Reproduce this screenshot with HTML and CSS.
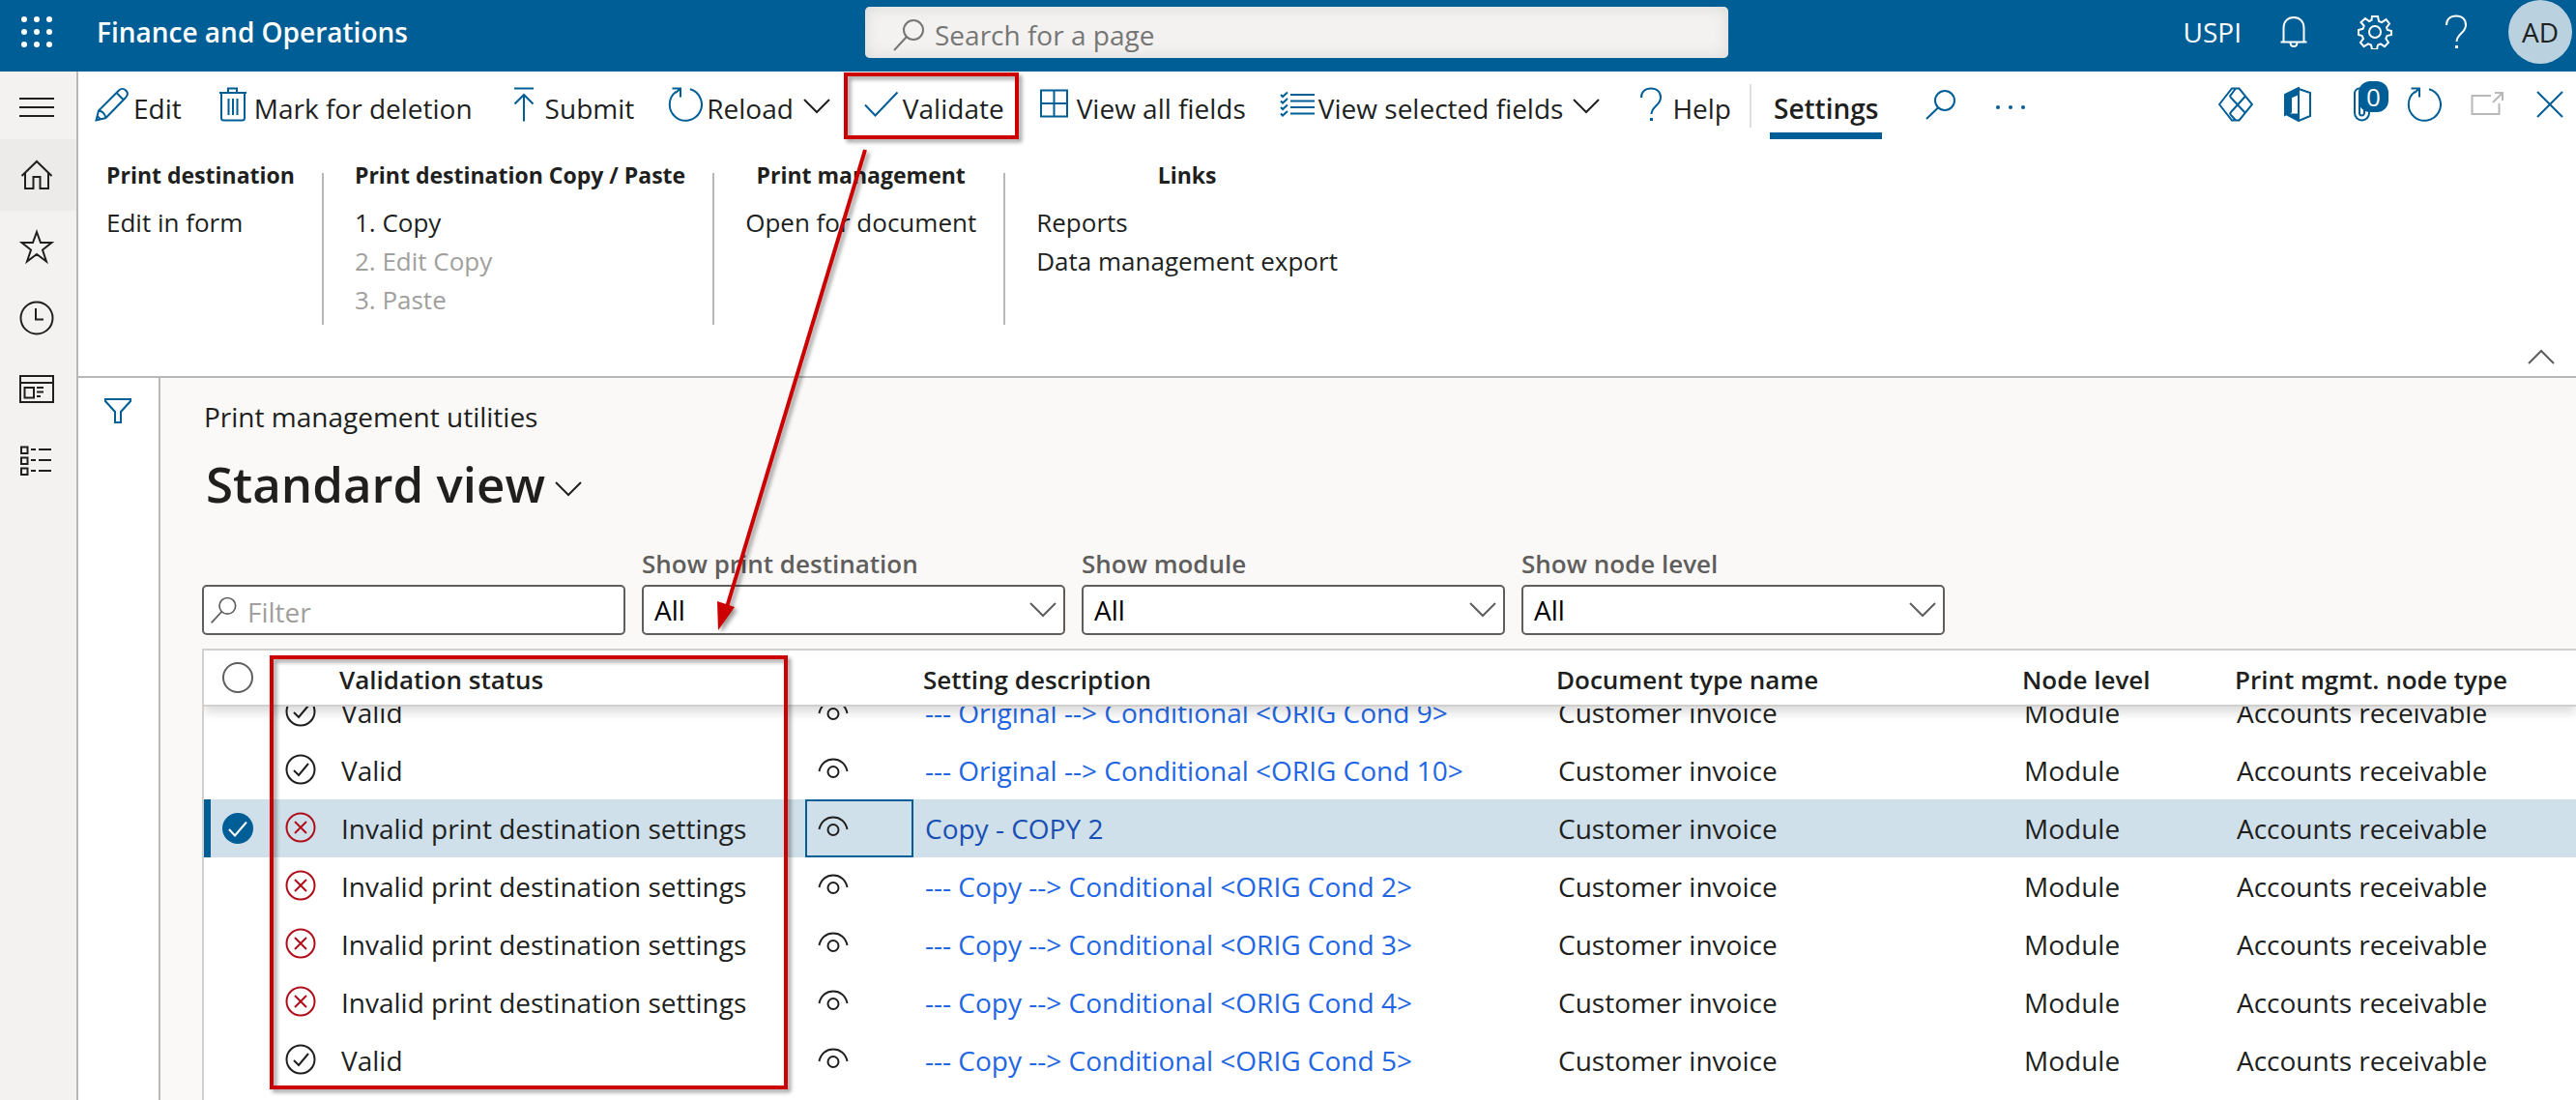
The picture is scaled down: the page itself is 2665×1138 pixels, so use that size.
FILE: index.html
```html
<!DOCTYPE html>
<html lang="en">
    <head>
        <meta charset="utf-8">
        <title>Finance and Operations</title>
        <link rel="stylesheet" href="styles.css">
    </head>
    <body>
        <!-- shared icons -->
        <svg class="sprite" aria-hidden="true">
            <symbol id="i-search" viewBox="0 0 36 36"><circle cx="22" cy="13" r="10"/><path d="M15 20L2 34"/></symbol>
            <symbol id="i-chevron" viewBox="0 0 28 16"><path d="M1 1l13 13L27 1"/></symbol>
            <symbol id="i-help" viewBox="0 0 36 36"><path d="M8 11C8 5 12 1.500 18 1.500S28 5 28 11c0 8-9.500 9-9.500 17"/><path d="M18.500 32v3" stroke-width="3"/></symbol>
            <symbol id="i-reload" viewBox="0 0 36 36"><path d="M23 2.200A16.600 16.600 0 1 1 8.500 4.800"/><path d="M4.500 1.500h8.500v9M13 1.500L8 6"/></symbol>
            <symbol id="i-valid" viewBox="0 0 32 32"><circle cx="16" cy="16" r="14.500"/><path d="M9 17l5 5 10-12"/></symbol>
            <symbol id="i-invalid" viewBox="0 0 32 32"><circle cx="16" cy="16" r="14.500"/><path d="M10 10l12 12M22 10L10 22"/></symbol>
            <symbol id="i-eye" viewBox="0 0 32 22"><path d="M1.500 14C3 6 9 1.500 16 1.500S29 6 30.500 14"/><circle cx="16" cy="14.500" r="5.500"/></symbol>
        </svg>

        <header class="topbar">
            <div class="topbar__left">
                <button class="waffle" aria-label="Apps">
                    <svg viewBox="0 0 32 32"><circle cx="3" cy="3" r="3"/><circle cx="16" cy="3" r="3"/><circle cx="29" cy="3" r="3"/><circle cx="3" cy="16" r="3"/><circle cx="16" cy="16" r="3"/><circle cx="29" cy="16" r="3"/><circle cx="3" cy="29" r="3"/><circle cx="16" cy="29" r="3"/><circle cx="29" cy="29" r="3"/></svg>
                </button>
                <span class="topbar__title">Finance and Operations</span>
            </div>
            <div class="search">
                <svg class="icon"><use href="#i-search"/></svg>
                <input type="text" class="search__input" placeholder="Search for a page" aria-label="Search for a page">
            </div>
            <div class="topbar__right">
                <button class="company">USPI</button>
                <button class="topbar__button" aria-label="Notifications">
                    <svg class="icon" viewBox="0 0 36 36"><path d="M4.500 28.500h27M7.500 28V14C7.500 7 12 3 18 3s10.500 4 10.500 11v14M14.500 29c0 2.500 1.500 4 3.500 4s3.500-1.500 3.500-4"/></svg>
                </button>
                <button class="topbar__button" aria-label="Settings">
                    <svg class="icon" viewBox="0 0 36 36"><circle cx="18" cy="18" r="6"/><path d="M15 2h6l1 5 3 1.200 4.500-3L33 9.500 30 13.500l1 2.500 4 1v4l-4.500 1-1.200 3 2.700 4-4 4.200-4.200-2.800-2.800 1.200-1 4.400h-5l-1-4.500-3-1.200-4.500 2.800L3 29l3-4-1.300-3L1 21v-5l4.500-1.200 1.200-3L3.500 8 8 4l4 3 2.500-1.200z"/></svg>
                </button>
                <button class="topbar__button" aria-label="Help">
                    <svg class="icon"><use href="#i-help"/></svg>
                </button>
                <button class="avatar">AD</button>
            </div>
        </header>

        <div class="layout">
            <nav class="sidebar">
                <button class="sidebar__item sidebar__item--menu" aria-label="Menu"><svg class="icon" viewBox="0 0 36 36"><path d="M0 9h36M0 18h36M0 27h36"/></svg></button>
                <button class="sidebar__item sidebar__item--active" aria-label="Home"><svg class="icon" viewBox="0 0 36 36"><path d="M2.500 19L18 4l15.500 15M6 16v16h8.500V20h7v12H30V16"/></svg></button>
                <button class="sidebar__item" aria-label="Favorites"><svg class="icon" viewBox="0 0 36 36"><path d="M18 3l4 11h11.500l-9.500 7.500 4 12L18 26l-10 7.500 4-12L2.500 14H14z"/></svg></button>
                <button class="sidebar__item" aria-label="Recent"><svg class="icon" viewBox="0 0 36 36"><circle cx="18" cy="18" r="16.500"/><path d="M17 8v11.500h8"/></svg></button>
                <button class="sidebar__item" aria-label="Workspaces"><svg class="icon" viewBox="0 0 36 36"><path d="M1 4h34v27H1zM1 11h34M5.500 16h9.500v10.500H5.500zM18 16h7M18 20.500h7M18 25h4"/></svg></button>
                <button class="sidebar__item" aria-label="Modules"><svg class="icon" viewBox="0 0 36 36"><path d="M2 3.500h6.500V10H2zM2 14.500h6.500V21H2zM2 25.500h6.500V32H2zM12 6h5M12 17h5M12 28h5M20 6h13M20 17h13M20 28h13"/></svg></button>
            </nav>

            <div class="page">
                <div class="actions">
                    <button class="action"><svg class="icon" viewBox="0 0 36 36"><path d="M1.500 34.500L4 24.500 25 3.500c2-2 5-2.200 7.200 0s2 5 0 7.200L11.500 32zM4 24.500c4 .5 6.500 3 7.500 7.500M22.500 6l7.500 7.500M2.500 30l3.500 3.500"/></svg>Edit</button>
                    <button class="action"><svg class="icon" viewBox="0 0 36 36"><path d="M4 6h28M13 6V1.500h9V6M6 6v26c0 1.500 1 2.500 2.500 2.500h19c1.500 0 2.500-1 2.500-2.500V6M13.500 12v17M18 12v17M22.500 12v17"/></svg>Mark for deletion</button>
                    <button class="action"><svg class="icon" viewBox="0 0 36 36"><path d="M8 1.500h20M18 8v27.500M8.500 17.500L18 8l9.500 9.500"/></svg>Submit</button>
                    <button class="action"><svg class="icon"><use href="#i-reload"/></svg>Reload<svg class="chevron"><use href="#i-chevron"/></svg></button>
                    <button class="action"><svg class="icon" viewBox="0 0 36 36"><path d="M1 18.500L11.500 29.500 34.500 5.500"/></svg>Validate</button>
                    <button class="action"><svg class="icon" viewBox="0 0 36 36"><path d="M3 3.500h27v27H3zM16.500 3.500v27M3 17h27"/></svg>View all fields</button>
                    <button class="action"><svg class="icon" viewBox="0 0 36 36"><path d="M11 8h25M11 14.500h25M11 21h25M11 27.500h25M1 8l2 2 5-4.500M1 14.500l2 2L8 12M1 21l2 2 5-4.500M1 27.500l2 2L8 25"/></svg>View selected fields<svg class="chevron"><use href="#i-chevron"/></svg></button>
                    <button class="action"><svg class="icon"><use href="#i-help"/></svg>Help</button>
                    <span class="actions__divider"></span>
                    <button class="action action--tab">Settings</button>
                    <button class="action" aria-label="Search actions"><svg class="icon" viewBox="0 0 36 36"><circle cx="20" cy="14" r="10"/><path d="M13.500 21L1 33"/></svg></button>
                    <button class="action" aria-label="More"><svg class="icon icon--dots" viewBox="0 0 36 36"><circle cx="4" cy="21" r="2"/><circle cx="17" cy="21" r="2"/><circle cx="30" cy="21" r="2"/></svg></button>

                    <div class="actions__right">
                        <button class="action" aria-label="Power Apps"><svg class="icon" viewBox="0 0 36 36"><path d="M18 1.500h-4L1 18l13 16.500h4M18 1.500h3.500L35 18 21.500 34.500H18M18 1.500L13 8c-1 1-1 2 0 3l15 16M28 9.500L13 26c-1 1-1 2 0 3l5 5.500"/></svg></button>
                        <button class="action" aria-label="Open in Office"><svg class="icon" viewBox="0 0 36 36"><path class="solid" d="M4 8L18 1v6l-8 3.500V26l-6 3zM6 28.500h12V35z"/><path d="M18 2l12 4v24l-12 5zM18 7v23"/></svg></button>
                        <button class="action attach" aria-label="Attachments"><svg class="icon" viewBox="0 0 36 36"><path d="M26 8v19a7.500 7.500 0 0 1-15 0V7c0-3 2-5.500 5-5.500s5 2.500 5 5.500v20a2.500 2.500 0 0 1-5 0V9"/></svg><span class="attach__count">0</span></button>
                        <button class="action" aria-label="Refresh"><svg class="icon"><use href="#i-reload"/></svg></button>
                        <button class="action" aria-label="Open in new window" disabled><svg class="icon" viewBox="0 0 36 36"><path d="M22 9H2.500v19h28V17M24 16L34 6M26 6h8v8"/></svg></button>
                        <button class="action" aria-label="Close"><svg class="icon" viewBox="0 0 36 36"><path d="M5 5l26 26M31 5L5 31"/></svg></button>
                    </div>
                </div>

                <div class="groups">
                    <section class="group">
                        <h2 class="group__title">Print destination</h2>
                        <button class="group__item">Edit in form</button>
                    </section>
                    <section class="group">
                        <h2 class="group__title">Print destination Copy / Paste</h2>
                        <button class="group__item">1. Copy</button>
                        <button class="group__item" disabled>2. Edit Copy</button>
                        <button class="group__item" disabled>3. Paste</button>
                    </section>
                    <section class="group">
                        <h2 class="group__title">Print management</h2>
                        <button class="group__item">Open for document</button>
                    </section>
                    <section class="group">
                        <h2 class="group__title">Links</h2>
                        <button class="group__item">Reports</button>
                        <button class="group__item">Data management export</button>
                    </section>
                    <button class="collapse" aria-label="Collapse"><svg class="chevron chevron--up"><use href="#i-chevron"/></svg></button>
                </div>

                <div class="body">
                    <div class="filterpane">
                        <button aria-label="Show filters"><svg class="icon" viewBox="0 0 36 36"><path d="M5 6h26v2L21 19v11h-6V19L5 8z"/></svg></button>
                    </div>

                    <main class="main">
                        <p class="caption">Print management utilities</p>
                        <h1 class="view">Standard view<svg class="chevron"><use href="#i-chevron"/></svg></h1>

                        <div class="fields">
                            <div class="box box--filter">
                                <svg class="icon"><use href="#i-search"/></svg>
                                <input type="text" class="box__control" placeholder="Filter" aria-label="Filter">
                            </div>
                            <div class="field">
                                <label class="field__label" for="dest">Show print destination</label>
                                <div class="box"><select class="box__control" id="dest"><option>All</option></select><svg class="chevron"><use href="#i-chevron"/></svg></div>
                            </div>
                            <div class="field">
                                <label class="field__label" for="module">Show module</label>
                                <div class="box"><select class="box__control" id="module"><option>All</option></select><svg class="chevron"><use href="#i-chevron"/></svg></div>
                            </div>
                            <div class="field">
                                <label class="field__label" for="level">Show node level</label>
                                <div class="box"><select class="box__control" id="level"><option>All</option></select><svg class="chevron"><use href="#i-chevron"/></svg></div>
                            </div>
                        </div>

                        <div class="grid" id="grid">
                            <table class="table">
                                <colgroup>
                                    <col class="col-select"><col class="col-icon"><col class="col-status"><col class="col-eye">
                                    <col class="col-desc"><col class="col-doc"><col class="col-level"><col>
                                </colgroup>
                                <thead>
                                    <tr>
                                        <th><input type="radio" class="tick" aria-label="Select all"></th>
                                        <th></th>
                                        <th>Validation status</th>
                                        <th></th>
                                        <th>Setting description</th>
                                        <th>Document type name</th>
                                        <th>Node level</th>
                                        <th>Print mgmt. node type</th>
                                    </tr>
                                </thead>
                                <tbody>
                                    <tr>
                                        <td></td>
                                        <td><svg class="status"><use href="#i-valid"/></svg></td>
                                        <td>Valid</td>
                                        <td><svg class="eye"><use href="#i-eye"/></svg></td>
                                        <td><a href="#">--- Original --&gt; Conditional &lt;ORIG Cond 9&gt;</a></td>
                                        <td>Customer invoice</td>
                                        <td>Module</td>
                                        <td>Accounts receivable</td>
                                    </tr>
                                    <tr>
                                        <td></td>
                                        <td><svg class="status"><use href="#i-valid"/></svg></td>
                                        <td>Valid</td>
                                        <td><svg class="eye"><use href="#i-eye"/></svg></td>
                                        <td><a href="#">--- Original --&gt; Conditional &lt;ORIG Cond 10&gt;</a></td>
                                        <td>Customer invoice</td>
                                        <td>Module</td>
                                        <td>Accounts receivable</td>
                                    </tr>
                                    <tr class="selected">
                                        <td><svg class="picked" viewBox="0 0 32 32"><circle cx="16" cy="16" r="16"/><path d="M7 17l6 6.500L25 9.500"/></svg></td>
                                        <td><svg class="status status--error"><use href="#i-invalid"/></svg></td>
                                        <td>Invalid print destination settings</td>
                                        <td class="focused"><svg class="eye"><use href="#i-eye"/></svg></td>
                                        <td><a href="#">Copy - COPY 2</a></td>
                                        <td>Customer invoice</td>
                                        <td>Module</td>
                                        <td>Accounts receivable</td>
                                    </tr>
                                    <tr>
                                        <td></td>
                                        <td><svg class="status status--error"><use href="#i-invalid"/></svg></td>
                                        <td>Invalid print destination settings</td>
                                        <td><svg class="eye"><use href="#i-eye"/></svg></td>
                                        <td><a href="#">--- Copy --&gt; Conditional &lt;ORIG Cond 2&gt;</a></td>
                                        <td>Customer invoice</td>
                                        <td>Module</td>
                                        <td>Accounts receivable</td>
                                    </tr>
                                    <tr>
                                        <td></td>
                                        <td><svg class="status status--error"><use href="#i-invalid"/></svg></td>
                                        <td>Invalid print destination settings</td>
                                        <td><svg class="eye"><use href="#i-eye"/></svg></td>
                                        <td><a href="#">--- Copy --&gt; Conditional &lt;ORIG Cond 3&gt;</a></td>
                                        <td>Customer invoice</td>
                                        <td>Module</td>
                                        <td>Accounts receivable</td>
                                    </tr>
                                    <tr>
                                        <td></td>
                                        <td><svg class="status status--error"><use href="#i-invalid"/></svg></td>
                                        <td>Invalid print destination settings</td>
                                        <td><svg class="eye"><use href="#i-eye"/></svg></td>
                                        <td><a href="#">--- Copy --&gt; Conditional &lt;ORIG Cond 4&gt;</a></td>
                                        <td>Customer invoice</td>
                                        <td>Module</td>
                                        <td>Accounts receivable</td>
                                    </tr>
                                    <tr>
                                        <td></td>
                                        <td><svg class="status"><use href="#i-valid"/></svg></td>
                                        <td>Valid</td>
                                        <td><svg class="eye"><use href="#i-eye"/></svg></td>
                                        <td><a href="#">--- Copy --&gt; Conditional &lt;ORIG Cond 5&gt;</a></td>
                                        <td>Customer invoice</td>
                                        <td>Module</td>
                                        <td>Accounts receivable</td>
                                    </tr>
                                </tbody>
                            </table>
                        </div>
                    </main>
                </div>
            </div>
        </div>

        <!-- red callouts over the page -->
        <svg class="callouts" viewBox="0 0 1100 1138" aria-hidden="true">
            <rect x="875" y="77" width="177" height="65"/>
            <rect x="281" y="680" width="532" height="445"/>
            <path d="M895 155L752 628"/>
            <path class="callouts__head" d="M743 652l-1-30 18 6z"/>
        </svg>

        <script>
            document.getElementById("grid").scrollTop = 24;
        </script>
    </body>
</html>
```

FILE: styles.css
```css
*{
    box-sizing: border-box;
}
html, body{
    height: 100%;
}
body{
    margin: 0;
    display: flex;
    flex-direction: column;
    overflow: hidden;
    position: relative;
    background: #fff;
    color: #201f1e;
    font-family: "Segoe UI", "Open Sans", sans-serif;
    font-size: 28px;
    line-height: 40px;
}
button, input, select{
    font: inherit;
    color: inherit;
    background: none;
    border: 0;
    padding: 0;
    margin: 0;
}
h1, h2, p{
    margin: 0;
}
svg{
    fill: none;
    stroke: currentColor;
    stroke-width: 2;
    flex: none;
}
.sprite{
    position: absolute;
    width: 0;
    height: 0;
}
.icon{
    display: block;
    width: 36px;
    height: 36px;
}
.chevron{
    width: 28px;
    height: 16px;
}
.chevron--up{
    transform: rotate(180deg);
}

/* top bar */
.topbar{
    flex: none;
    height: 74px;
    display: grid;
    grid-template-columns: 1fr 893px 1fr;
    padding: 0 4px 8px 22px;
    align-items: center;
    background: #005e96;
    color: #fff;
}
.topbar__left{
    display: flex;
    align-items: center;
    gap: 46px;
}
.waffle svg{
    display: block;
    width: 32px;
    height: 32px;
    fill: currentColor;
    stroke: none;
}
.topbar__title{
    font-weight: 600;
}
.search{
    height: 53px;
    display: flex;
    align-items: center;
    gap: 8px;
    padding: 6px 28px 0;
    border-radius: 5px;
    background: #f3f2f1;
    box-shadow: inset 0 0 16px #d8d8d8;
    color: #767676;
}
.search__input{
    flex: 1;
    outline: 0;
}
input::placeholder{
    color: inherit;
    opacity: 1;
}
.topbar__right{
    display: flex;
    justify-content: flex-end;
    align-items: center;
    gap: 24px;
}
.topbar__button{
    width: 60px;
}
.topbar__button .icon{
    margin: 0 auto;
}
.avatar{
    width: 66px;
    height: 66px;
    border-radius: 50%;
    background: #bad2e0;
    color: #201f1e;
}

/* left navigation */
.layout{
    flex: 1;
    min-height: 0;
    display: flex;
}
.sidebar{
    flex: none;
    width: 81px;
    display: flex;
    flex-direction: column;
    background: #f3f2f1;
    border-right: 2px solid #bab8b7;
}
.sidebar__item{
    height: 74px;
    padding-left: 20px;
}
.sidebar__item--menu{
    height: 70px;
    padding-top: 4px;
}
.sidebar__item--active{
    background: #edebe9;
}
.page{
    flex: 1;
    min-width: 0;
    display: flex;
    flex-direction: column;
}

/* action pane */
.actions{
    flex: none;
    height: 70px;
    padding: 6px 9px 0 17px;
    display: flex;
    gap: 35px;
}
.action{
    display: flex;
    align-items: center;
    gap: 4px;
    white-space: nowrap;
}
.action .icon{
    color: #005e96;
    margin-bottom: 8px;
}
.action .chevron{
    margin-left: 6px;
    margin-bottom: 4px;
}
.action .icon--dots{
    fill: currentColor;
    stroke: none;
}
.action .solid{
    fill: currentColor;
}
.action:disabled .icon{
    color: #bab8b7;
}
.action--tab{
    padding: 0 4px;
    margin-right: 10px;
    font-weight: 600;
    box-shadow: inset 0 -7px #005e96;
}
.actions__divider{
    width: 2px;
    height: 45px;
    margin: 7px -16px 0;
    background: #e1dfdd;
}
.actions__right{
    margin-left: auto;
    display: flex;
    gap: 29px;
}
.attach{
    position: relative;
}
.attach__count{
    position: absolute;
    top: 4px;
    left: 15px;
    width: 31px;
    height: 32px;
    border-radius: 12px;
    background: #005e96;
    color: #fff;
    font-size: 26px;
    line-height: 32px;
    text-align: center;
}
.groups{
    flex: none;
    height: 247px;
    padding-top: 17px;
    display: flex;
    border-bottom: 2px solid #bab8b7;
}
.group{
    position: relative;
    display: flex;
    flex-direction: column;
    align-items: flex-start;
    padding: 0 28px 0 29px;
}
.group + .group{
    padding-left: 34px;
}
.group + .group::before{
    content: "";
    position: absolute;
    left: 0;
    top: 18px;
    width: 2px;
    height: 157px;
    background: #bab8b7;
}
.group__title{
    align-self: center;
    margin-bottom: 9px;
    font-size: 23px;
    font-weight: 700;
}
.group__item{
    height: 40px;
    font-size: 26px;
}
.group__item:disabled{
    color: #a19f9d;
}
.collapse{
    margin: auto 22px 12px auto;
    color: #605e5c;
    line-height: 16px;
}

/* page body */
.body{
    flex: 1;
    min-height: 0;
    display: flex;
}
.filterpane{
    flex: none;
    width: 85px;
    padding: 16px 0 0 23px;
    border-right: 2px solid #bab8b7;
    color: #005e96;
}
.main{
    flex: 1;
    min-width: 0;
    display: flex;
    flex-direction: column;
    padding: 20px 0 0 43px;
    background: #faf9f8;
}
.caption{
    padding-left: 2px;
}
.view{
    display: flex;
    align-items: center;
    gap: 10px;
    padding-left: 4px;
    font-size: 51px;
    line-height: 98px;
    font-weight: 600;
}
.view .chevron{
    margin-top: 12px;
}
.fields{
    display: flex;
    align-items: flex-end;
    gap: 17px;
    padding-top: 14px;
}
.field__label{
    display: block;
    margin-bottom: 2px;
    color: #605e5c;
    font-size: 26px;
    font-weight: 600;
}
.box{
    width: 438px;
    height: 52px;
    display: flex;
    align-items: center;
    padding-right: 7px;
    border: 2px solid #605e5c;
    border-radius: 5px;
    background: #fff;
    color: #605e5c;
}
.box__control{
    flex: 1;
    min-width: 0;
    height: 48px;
    outline: 0;
}
select.box__control{
    appearance: none;
    padding-left: 11px;
    margin-right: -28px;
    color: #000;
}
.box--filter{
    padding-left: 6px;
    gap: 9px;
    color: #a19f9d;
}
.box--filter .box__control{
    padding-top: 4px;
}
.box--filter .icon{
    width: 30px;
    height: 30px;
    color: #605e5c;
}

/* grid */
.grid{
    flex: 1;
    min-height: 0;
    margin-top: 14px;
    overflow: hidden;
    padding-bottom: 60px;
    border-top: 2px solid #d2d0ce;
    border-left: 2px solid #d2d0ce;
    background: #fff;
}
.table{
    width: 100%;
    table-layout: fixed;
    border-spacing: 0;
}
.col-select{ width: 66px; }
.col-icon{ width: 64px; }
.col-status{ width: 492px; }
.col-eye{ width: 112px; }
.col-desc{ width: 655px; }
.col-doc{ width: 482px; }
.col-level{ width: 220px; }
thead{
    position: sticky;
    top: 0;
    box-shadow: 0 6px 10px rgba(0, 0, 0, 0.14);
}
th{
    height: 58px;
    padding: 4px 0 0 10px;
    background: #fff;
    border-bottom: 2px solid #d2d0ce;
    text-align: left;
    font-size: 26px;
    font-weight: 600;
    white-space: nowrap;
}
td{
    height: 60px;
    padding: 0 0 0 12px;
    white-space: nowrap;
}
.tick{
    appearance: none;
    display: block;
    width: 32px;
    height: 32px;
    margin: -4px 0 0 9px;
    border: 2px solid #605e5c;
    border-radius: 50%;
}
.status{
    display: block;
    width: 32px;
    height: 32px;
    margin: 0 0 2px 6px;
}
.status--error{
    color: #b10e1c;
}
.eye{
    display: block;
    width: 32px;
    height: 22px;
    margin: 0 0 4px 1px;
}
.selected td{
    background: #d0e0ea;
}
.selected td:first-child{
    box-shadow: inset 7px 0 #005e96;
}
.selected .focused{
    box-shadow: inset 0 0 0 2px #005e96;
}
.picked{
    display: block;
    width: 32px;
    height: 32px;
    margin-left: 7px;
    fill: #005e96;
    stroke: none;
}
.picked path{
    fill: none;
    stroke: #fff;
    stroke-width: 2;
}
a{
    color: #2266e3;
    text-decoration: none;
}
.selected a{
    color: #174fb2;
}

/* callouts */
.callouts{
    position: absolute;
    top: 0;
    left: 0;
    width: 1100px;
    height: 1138px;
    stroke: #c00;
    stroke-width: 4;
    pointer-events: none;
    filter: drop-shadow(3px 3px 2px rgba(0, 0, 0, 0.4));
}
.callouts__head{
    fill: #c00;
    stroke: none;
}
```
